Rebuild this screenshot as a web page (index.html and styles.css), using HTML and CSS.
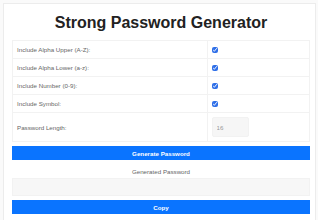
FILE: index.html
```html
<!DOCTYPE html>
<html lang="en">
<head>
  <meta charset="UTF-8" />
  <meta name="viewport" content="width=device-width, initial-scale=1.0" />
  <title>Strong Password Generator</title>
  <link rel="stylesheet" href="styles.css">
</head>
<body>

  <div class="container">
    <h1 class="title">Strong Password Generator</h1>

    <table>
      <tr>
        <td>Include Alpha Upper (A-Z):</td>
        <td><input type="checkbox" id="upper" checked /></td>
      </tr>
      <tr>
        <td>Include Alpha Lower (a-z):</td>
        <td><input type="checkbox" id="lower" checked /></td>
      </tr>
      <tr>
        <td>Include Number (0-9):</td>
        <td><input type="checkbox" id="number" checked /></td>
      </tr>
      <tr>
        <td>Include Symbol:</td>
        <td><input type="checkbox" id="symbol" checked /></td>
      </tr>
      <tr class="length-row">
        <td>Password Length:</td>
        <td><input type="number" id="length" value="16" min="4" max="64" /></td>
      </tr>
    </table>

    <button id="generateBtn">Generate Password</button>

    <div class="result-label">Generated Password</div>
    <input type="text" id="result" readonly />

    <button id="copyBtn">Copy</button>
  </div>

  <script>
    const upper = "ABCDEFGHIJKLMNOPQRSTUVWXYZ";
    const lower = "abcdefghijklmnopqrstuvwxyz";
    const numbers = "0123456789";
    const symbols = "!@#$%^&*()_+-=[]{}<>?";

    document.getElementById("generateBtn").addEventListener("click", () => {
      let chars = "";
      if (document.getElementById("upper").checked) chars += upper;
      if (document.getElementById("lower").checked) chars += lower;
      if (document.getElementById("number").checked) chars += numbers;
      if (document.getElementById("symbol").checked) chars += symbols;
      if (!chars) return;

      const len = parseInt(document.getElementById("length").value) || 16;
      let pass = "";
      for (let i = 0; i < len; i++) {
        pass += chars[Math.floor(Math.random() * chars.length)];
      }
      document.getElementById("result").value = pass;
    });

    document.getElementById("copyBtn").addEventListener("click", () => {
      const result = document.getElementById("result");
      result.select();
      document.execCommand("copy");
    });
  </script>

</body>
</html>
```

FILE: styles.css
```css
* { margin: 0; padding: 0; box-sizing: border-box; }
body {
  font-family: "Liberation Sans", Arial, sans-serif;
  background: #fafafa;
  color: #666;
}
.container {
  margin: 3px 2px 0 3px;
  padding: 0 5px 10px 8px;
  background: white;
  border: 1px solid #ececec;
  border-bottom: none;
}
.title {
  font-size: 16px;
  font-weight: bold;
  color: #222;
  text-align: center;
  padding: 10px 0 8px;
}
table {
  width: 100%;
  border-collapse: collapse;
}
td {
  border: 1px solid #f2f2f2;
  padding: 0 4px;
  height: 18px;
  font-size: 6.2px;
  text-align: left;
}
td:first-child {
  width: 65.5%;
}
.length-row td {
  height: 29px;
}
input[type="checkbox"] {
  width: 6px;
  height: 6px;
  accent-color: #2f6fe8;
  vertical-align: middle;
  margin-top: -1px;
}
input[type="number"] {
  width: 37px;
  height: 20px;
  padding: 0 4px;
  font-family: inherit;
  font-size: 6.2px;
  color: #999;
  background: #f6f6f6;
  border: 1px solid #f2f2f2;
  border-radius: 2px;
  -moz-appearance: textfield;
}
input[type="number"]::-webkit-inner-spin-button,
input[type="number"]::-webkit-outer-spin-button {
  -webkit-appearance: none;
}
button {
  display: block;
  width: 100%;
  height: 14px;
  margin-top: 4px;
  border: none;
  background: #0a74ff;
  color: white;
  font-family: inherit;
  font-size: 6.2px;
  font-weight: bold;
  cursor: pointer;
}
.result-label {
  text-align: center;
  font-size: 6.2px;
  padding: 8px 0 3px;
}
#result {
  display: block;
  width: 100%;
  height: 18px;
  background: #f7f7f7;
  border: 1px solid #f2f2f2;
  font-family: inherit;
  font-size: 6.2px;
  padding: 0 4px;
}
```
